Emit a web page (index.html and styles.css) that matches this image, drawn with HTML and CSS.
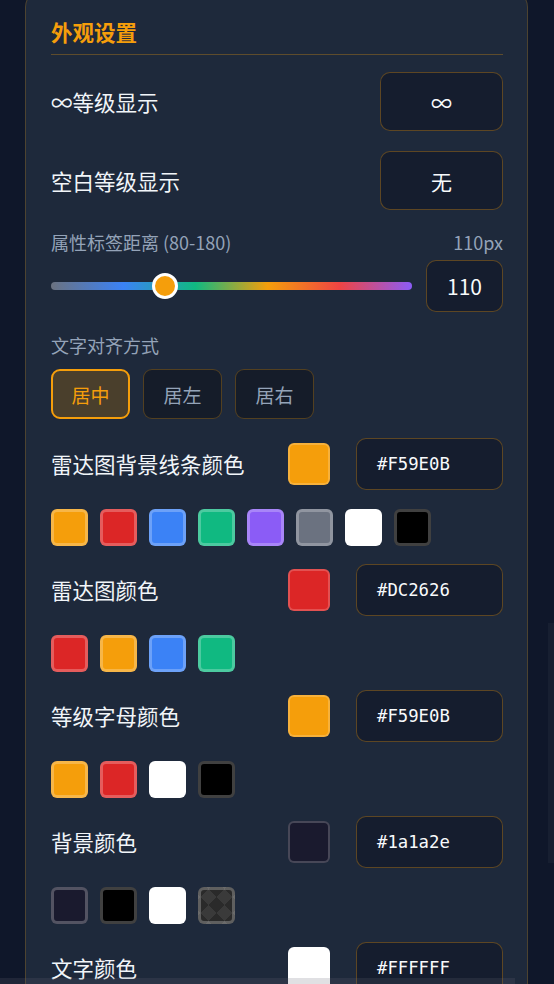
FILE: index.html
```html
<!DOCTYPE html>
<html lang="zh-CN">
<head>
<meta charset="utf-8">
<title>外观设置</title>
<link rel="stylesheet" href="styles.css">
</head>
<body>
<div class="card">
  <h2 class="title">外观设置</h2>

  <div class="opt-row first">
    <span class="label">∞等级显示</span>
    <div class="box">∞</div>
  </div>
  <div class="opt-row">
    <span class="label">空白等级显示</span>
    <div class="box">无</div>
  </div>

  <div class="field-label">
    <span>属性标签距离 (80-180)</span>
    <span>110px</span>
  </div>
  <div class="slider-row">
    <div class="track">
      <div class="bar"></div>
      <div class="thumb" style="left: calc((100% - 26px) * 0.3)"></div>
    </div>
    <div class="num">110</div>
  </div>

  <div class="field-label">
    <span>文字对齐方式</span>
  </div>
  <div class="align-group">
    <div class="abtn active">居中</div>
    <div class="abtn">居左</div>
    <div class="abtn">居右</div>
  </div>

  <div class="color-block">
    <div class="color-row">
      <span class="label">雷达图背景线条颜色</span>
      <div class="big c-orange"></div>
      <div class="hex">#F59E0B</div>
    </div>
    <div class="swatches">
      <div class="sw c-orange"></div>
      <div class="sw c-red"></div>
      <div class="sw c-blue"></div>
      <div class="sw c-green"></div>
      <div class="sw c-purple"></div>
      <div class="sw c-gray"></div>
      <div class="sw c-white"></div>
      <div class="sw c-black"></div>
    </div>
  </div>

  <div class="color-block">
    <div class="color-row">
      <span class="label">雷达图颜色</span>
      <div class="big c-red"></div>
      <div class="hex">#DC2626</div>
    </div>
    <div class="swatches">
      <div class="sw c-red"></div>
      <div class="sw c-orange"></div>
      <div class="sw c-blue"></div>
      <div class="sw c-green"></div>
    </div>
  </div>

  <div class="color-block">
    <div class="color-row">
      <span class="label">等级字母颜色</span>
      <div class="big c-orange"></div>
      <div class="hex">#F59E0B</div>
    </div>
    <div class="swatches">
      <div class="sw c-orange"></div>
      <div class="sw c-red"></div>
      <div class="sw c-white"></div>
      <div class="sw c-black"></div>
    </div>
  </div>

  <div class="color-block">
    <div class="color-row">
      <span class="label">背景颜色</span>
      <div class="big c-navy"></div>
      <div class="hex">#1a1a2e</div>
    </div>
    <div class="swatches">
      <div class="sw c-navy"></div>
      <div class="sw c-black"></div>
      <div class="sw c-white"></div>
      <div class="sw c-checker"></div>
    </div>
  </div>

  <div class="color-block">
    <div class="color-row">
      <span class="label">文字颜色</span>
      <div class="big c-white"></div>
      <div class="hex">#FFFFFF</div>
    </div>
  </div>
</div>
<div class="vscroll"></div>
<div class="hscroll"></div>
</body>
</html>
```

FILE: styles.css
```css
html, body {
  margin: 0;
  padding: 0;
}
body {
  width: 554px;
  height: 984px;
  overflow: hidden;
  background: #0f172a;
  font-family: "Noto Sans CJK SC", "Noto Sans", sans-serif;
  color: #f1f5f9;
}
.card {
  box-sizing: border-box;
  width: 503px;
  margin: -9px 0 0 25px;
  padding: 25px 24px 40px 25px;
  border: 1px solid rgba(245, 158, 11, 0.22);
  border-radius: 16px;
  background: #1e293b;
}
.title {
  margin: 0;
  font-size: 21.5px;
  line-height: 30px;
  font-weight: 700;
  color: #f59e0b;
  padding-bottom: 7px;
  border-bottom: 1px solid rgba(245, 158, 11, 0.3);
}
.label {
  font-size: 21.5px;
  line-height: 30px;
  color: #f1f5f9;
}
.opt-row {
  display: flex;
  align-items: center;
  justify-content: space-between;
  margin-top: 20px;
}
.opt-row.first {
  margin-top: 17px;
}
.box {
  box-sizing: border-box;
  width: 123px;
  height: 59px;
  display: flex;
  align-items: center;
  justify-content: center;
  border: 1px solid rgba(245, 158, 11, 0.32);
  border-radius: 10px;
  background: #151d2e;
  font-size: 21px;
  color: #f8fafc;
}
.field-label {
  display: flex;
  justify-content: space-between;
  margin-top: 21px;
  font-size: 18px;
  line-height: 24px;
  color: #94a3b8;
}
.opt-row + .field-label {
  margin-top: 20px;
}
.slider-row {
  display: flex;
  align-items: center;
  margin-top: 6px;
  height: 52px;
}
.track {
  flex: 1;
  position: relative;
  height: 26px;
  display: flex;
  align-items: center;
}
.bar {
  width: 100%;
  height: 8px;
  border-radius: 4px;
  background: linear-gradient(90deg, #6b7280 0%, #3b82f6 20%, #10b981 40%, #f59e0b 60%, #ef4444 80%, #8b5cf6 100%);
}
.thumb {
  position: absolute;
  top: 0;
  box-sizing: border-box;
  width: 26px;
  height: 26px;
  border-radius: 50%;
  border: 3px solid #ffffff;
  background: #f59e0b;
}
.num {
  box-sizing: border-box;
  width: 77px;
  height: 52px;
  margin-left: 14px;
  display: flex;
  align-items: center;
  justify-content: center;
  border: 1px solid rgba(245, 158, 11, 0.32);
  border-radius: 10px;
  background: #151d2e;
  font-size: 21px;
  color: #f8fafc;
}
.align-group {
  display: flex;
  gap: 13px;
  margin-top: 12px;
}
.abtn {
  box-sizing: border-box;
  width: 79px;
  height: 50px;
  display: flex;
  align-items: center;
  justify-content: center;
  border: 1px solid rgba(245, 158, 11, 0.28);
  border-radius: 9px;
  background: #151c29;
  font-size: 19px;
  color: #94a3b8;
}
.abtn.active {
  border: 2px solid #f59e0b;
  background: #4a3f2c;
  color: #f59e0b;
}
.color-block {
  margin-top: 18px;
}
.align-group + .color-block {
  margin-top: 19px;
}
.color-row {
  display: flex;
  align-items: center;
  height: 52px;
}
.color-row .label {
  flex: 1;
}
.big {
  box-sizing: border-box;
  width: 42px;
  height: 42px;
  border-radius: 6px;
  border: 2px solid rgba(255, 255, 255, 0.2);
  margin-right: 26px;
}
.hex {
  box-sizing: border-box;
  width: 147px;
  height: 52px;
  display: flex;
  align-items: center;
  padding-left: 20px;
  border: 1px solid rgba(245, 158, 11, 0.32);
  border-radius: 10px;
  background: #151d2e;
  font-family: "DejaVu Sans Mono", "Liberation Mono", monospace;
  font-size: 17.3px;
  color: #f8fafc;
}
.swatches {
  display: flex;
  gap: 12px;
  margin-top: 19px;
}
.sw {
  box-sizing: border-box;
  width: 37px;
  height: 37px;
  border-radius: 6px;
  border: 3px solid rgba(255, 255, 255, 0.25);
}
.c-orange { background-color: #f59e0b; }
.c-red { background-color: #dc2626; }
.c-blue { background-color: #3b82f6; }
.c-green { background-color: #10b981; }
.c-purple { background-color: #8b5cf6; }
.c-gray { background-color: #6b7280; }
.c-white { background-color: #ffffff; }
.c-black { background-color: #000000; }
.c-navy { background-color: #1a1a2e; }
.c-checker {
  background-color: #3a3a3a;
  background-image:
    linear-gradient(45deg, #2a2a2a 25%, transparent 25%),
    linear-gradient(-45deg, #2a2a2a 25%, transparent 25%),
    linear-gradient(45deg, transparent 75%, #2a2a2a 75%),
    linear-gradient(-45deg, transparent 75%, #2a2a2a 75%);
  background-size: 16px 16px;
  background-position: -1px -1px;
}
.vscroll {
  position: fixed;
  right: 0;
  top: 623px;
  width: 6px;
  height: 240px;
  background: rgba(255, 255, 255, 0.035);
}
.hscroll {
  position: fixed;
  left: 0;
  bottom: 0;
  width: 515px;
  height: 6px;
  background: rgba(100, 100, 115, 0.2);
}
```
